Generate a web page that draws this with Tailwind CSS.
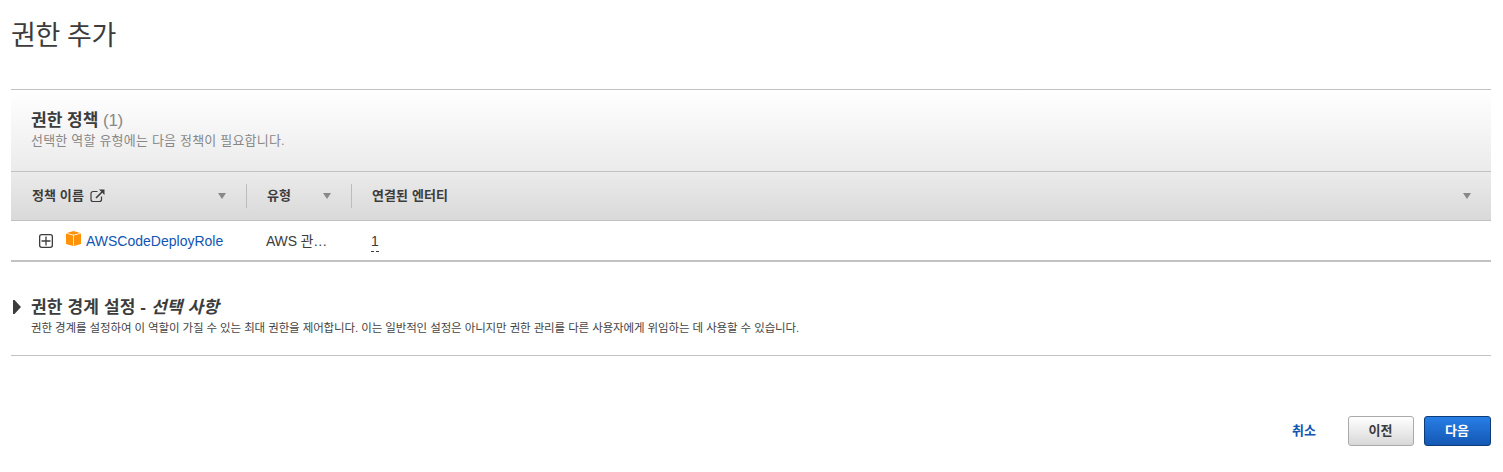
<!DOCTYPE html>
<html lang="ko">
<head>
<meta charset="utf-8">
<title>권한 추가</title>
<script src="https://cdn.jsdelivr.net/npm/@tailwindcss/browser@4"></script>
</head>
<body class="bg-white text-[#3c3c3c] font-['Liberation_Sans','Noto_Sans_CJK_KR',sans-serif] whitespace-nowrap">
<main class="w-[1503px] h-[472px] pl-[11px] pr-3 overflow-hidden flex flex-col">
  <h1 class="h-[89px] pt-[18px] text-[27px] leading-9 tracking-[-0.4px]"><span>권한 추가</span></h1>

  <section class="border-t border-b-2 border-[#c2c2c2]">
    <header class="h-[81px] pt-[21px] pl-5 bg-linear-to-b from-white to-[#ebebeb]">
      <h2 class="text-[17px] leading-5 font-bold"><span>권한 정책</span> <span class="font-normal text-[#888] tracking-[-0.3px]">(1)</span></h2>
      <p class="text-[13px] leading-5 tracking-[0.2px] text-[#888]"><span>선택한 역할 유형에는 다음 정책이 필요합니다.</span></p>
    </header>
    <div class="h-[50px] border-y border-[#c2c2c2] bg-linear-to-b from-[#ebebeb] to-[#d9d9d9] flex items-center text-[13px] leading-5 tracking-[0.1px] font-bold">
      <div class="w-[236px] h-6 pl-[21px] pr-5 border-r border-[#bcbcbc] flex items-center">
        <span>정책 이름</span>
        <svg class="ml-[6px] w-[15px] h-[14px]" viewBox="0 0 15 14" fill="none" stroke="#3c3c3c" stroke-width="1.2"><path d="M7.500 2.500H3A2 2 0 0 0 1 4.500V10.500a2 2 0 0 0 2 2h6.500a2 2 0 0 0 2-2V7.500"/><path d="M6 9L12 3" stroke-width="1.600"/><path d="M9 .5h5.500V6z" fill="#3c3c3c" stroke="none"/></svg>
        <svg class="ml-auto w-2 h-[6px]" viewBox="0 0 8 6"><path d="M0 0h8L4 6z" fill="#888"/></svg>
      </div>
      <div class="w-[105px] h-6 pl-[20px] pr-5 border-r border-[#bcbcbc] flex items-center justify-between">
        <span>유형</span>
        <svg class="w-2 h-[6px]" viewBox="0 0 8 6"><path d="M0 0h8L4 6z" fill="#888"/></svg>
      </div>
      <div class="flex-1 pl-5 pr-5 flex items-center justify-between">
        <span>연결된 엔터티</span>
        <svg class="w-2 h-[6px]" viewBox="0 0 8 6"><path d="M0 0h8L4 6z" fill="#888"/></svg>
      </div>
    </div>
    <div class="h-[39px] flex items-center text-sm leading-5">
      <div class="w-[255px] pl-7 flex items-center">
        <svg class="w-[14px] h-[14px] mt-[1px]" viewBox="0 0 14 14" fill="none" stroke="#3c3c3c" stroke-width="1.300"><rect x=".65" y=".65" width="12.700" height="12.700" rx="2"/><path d="M7 2.500v9M2.500 7h9"/></svg>
        <svg class="ml-[13px] mb-[4px] w-[15px] h-[15px]" viewBox="0 0 15 15" fill="#ff9208"><path d="M7.500 0L14.300 1.900L7.500 3.800L.7 1.900z"/><path d="M0 2.600L7.100 4.600V15L0 13z"/><path d="M15 2.600L7.900 4.600V15L15 13z"/></svg>
        <a class="ml-[5px] text-[#1155b3]">AWSCodeDeployRole</a>
      </div>
      <div class="w-[105px] tracking-[-0.2px]"><span>AWS 관…</span></div>
      <div class="pt-[3px]"><span class="block h-[19px] leading-4 border-b border-dashed border-[#3c3c3c]">1</span></div>
    </div>
  </section>

  <section class="h-[94px] border-b border-[#c2c2c2] pt-[36px] flex">
    <svg class="mt-[2px] ml-[2px] w-2 h-[14px]" viewBox="0 0 8 14"><path d="M0 0h1.500L8 7L1.500 14H0z" fill="#3c3c3c"/></svg>
    <div class="ml-[10px]">
      <h2 class="text-[17px] leading-5 font-bold tracking-[0.15px]"><span>권한 경계 설정 - </span><em>선택 사항</em></h2>
      <p class="mt-[1px] text-[11.500px] leading-[18px] tracking-[-0.11px] text-[#444]"><span>권한 경계를 설정하여 이 역할이 가질 수 있는 최대 권한을 제어합니다. 이는 일반적인 설정은 아니지만 권한 관리를 다른 사용자에게 위임하는 데 사용할 수 있습니다.</span></p>
    </div>
  </section>

  <footer class="mt-[60px] flex justify-end items-center text-[13px] leading-5 font-bold">
    <a class="mr-[32px] text-[#1155b3]">취소</a>
    <button class="w-[66px] h-[30px] mr-[10px] pr-px rounded-[3px] border border-[#aaa] bg-linear-to-b from-white to-[#d8d8d8]">이전</button>
    <button class="w-[67px] h-[30px] pr-px rounded-[3px] border border-[#0c3d78] bg-linear-to-b from-[#287ee6] to-[#1458b4] text-white">다음</button>
  </footer>
</main>
</body>
</html>
